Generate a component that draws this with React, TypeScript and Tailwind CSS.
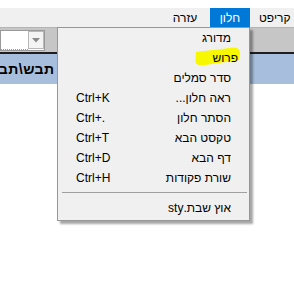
import React from 'react';

const font = { fontFamily: '"Liberation Sans", "DejaVu Sans", sans-serif' };

const items = [
  { label: 'מדורג', keys: '' },
  { label: 'פרוש', keys: '', marked: true },
  { label: 'סדר סמלים', keys: '' },
  { label: 'ראה חלון...', keys: 'Ctrl+K' },
  { label: 'הסתר חלון', keys: 'Ctrl+.' },
  { label: 'טקסט הבא', keys: 'Ctrl+T' },
  { label: 'דף הבא', keys: 'Ctrl+D' },
  { label: 'שורת פקודות', keys: 'Ctrl+H' },
];

const MenuRow = ({ label, keys, marked }: { label: string; keys: string; marked?: boolean }) => (
  <div className="relative flex h-[20px] items-center justify-between pl-[18px] pr-[18px]">
    <span dir="ltr" className="text-[12px] text-black">{keys}</span>
    {marked && (
      <svg className="absolute left-[136px] top-[-1px]" width="48" height="19" viewBox="0 0 48 19">
        <path d="M2 5 L40 0.5 Q46 1 46 6 L45 13 L8 18.5 Q2 18 1.5 15 Z" fill="#f7f700" />
      </svg>
    )}
    <span dir="rtl" className={`relative text-[12px] text-black ${marked ? 'mr-[-7px]' : ''}`}>{label}</span>
  </div>
);

export default function App() {
  return (
    <div className="relative h-[294px] w-[294px] overflow-hidden bg-white" style={font}>
      <div className="h-[8px] bg-white" />

      {/* menu bar */}
      <div className="flex h-[19px] bg-[#f0f0f0] text-[12px] text-black">
        <div className="w-[165px]" />
        <div className="flex w-[40px] items-center justify-center">עזרה</div>
        <div className="ml-[5px] flex w-[40px] items-center justify-center bg-[#0078d7] text-white">חלון</div>
        <div className="flex items-center whitespace-nowrap pl-[9px]">קריפט</div>
      </div>

      {/* toolbar */}
      <div className="h-[1px] bg-[#b4b4b4]" />
      <div className="flex h-[24px] items-center bg-[#c6c6c6]">
        <div className="flex h-[21px] w-[45px] items-center border border-[#9a9a9a] bg-white">
          <div className="h-full flex-1 border-b border-dotted border-[#9a9a9a]" />
          <div className="flex h-[18px] w-[16px] items-center justify-center border border-[#b8b8b8] bg-[#f4f4f4]">
            <svg width="8" height="5" viewBox="0 0 8 5">
              <path d="M0 0 H8 L4 4.5 Z" fill="#8a8a8a" />
            </svg>
          </div>
        </div>
      </div>
      <div className="h-[2px] bg-[#1e1e1e]" />

      {/* selected line: the text runs on under the open menu */}
      <div className="flex h-[30px] items-center bg-[#a7bfdc]">
        <span className="ml-[-6px] whitespace-nowrap text-[14px] font-bold tracking-[0.5px] text-black">
          שבת תבש\תבי
        </span>
      </div>

      {/* dropdown */}
      <div className="absolute left-[57px] top-[27px] w-[193px] border border-[#979797] bg-[#f0f0f0] shadow-[3px_3px_2px_rgba(0,0,0,0.35)]">
        {items.map(it => (
          <MenuRow key={it.label} label={it.label} keys={it.keys} marked={it.marked} />
        ))}
        <div className="ml-[4px] mr-[2px] mt-[4px] h-[1px] bg-[#a0a0a0]" />
        <div className="mt-[5px] mb-[2px] flex h-[20px] items-center justify-end pr-[18px]">
          <span dir="rtl" className="text-[12px] text-black">אוץ שבת.sty</span>
        </div>
      </div>
    </div>
  );
}
